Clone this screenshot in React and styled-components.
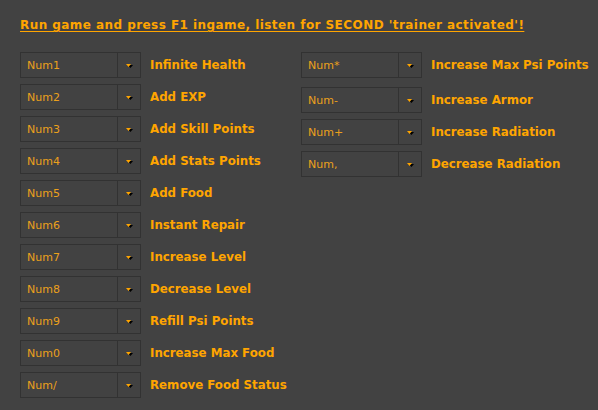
import React from "react";
import styled, { createGlobalStyle } from "styled-components";

const orange = "#ffa500";

const GlobalStyle = createGlobalStyle`
  html, body {
    margin: 0;
    padding: 0;
    background: #424242;
  }
  body {
    font-family: "DejaVu Sans", Verdana, sans-serif;
  }
`;

const Page = styled.div`
  width: 598px;
  height: 410px;
  box-sizing: border-box;
  padding: 18px 0 0 20px;
  background: #424242;
  overflow: hidden;
`;

const Notice = styled.div`
  font-size: 12px;
  font-weight: bold;
  letter-spacing: 0.44px;
  color: ${orange};
  text-decoration: underline;
  text-underline-offset: 2px;
  line-height: 15px;
  margin-bottom: 19px;
`;

const Columns = styled.div`
  display: grid;
  grid-template-columns: 281px 1fr;
`;

const Column = styled.div`
  display: flex;
  flex-direction: column;
`;

const Row = styled.div`
  display: flex;
  align-items: center;
  height: 26px;
  margin-bottom: ${(p) => (p.$tall ? "9px" : "6px")};
`;

const Select = styled.div`
  display: flex;
  width: 121px;
  height: 26px;
  box-sizing: border-box;
  border: 1px solid #323232;
  background: #424242;
  flex-shrink: 0;
`;

const SelectValue = styled.div`
  flex: 1;
  display: flex;
  align-items: center;
  padding-left: 6px;
  font-size: 11px;
  color: #eba01c;
`;

const SelectButton = styled.div`
  width: 22px;
  border-left: 1px solid #323232;
  display: flex;
  align-items: center;
  justify-content: center;
`;

const Label = styled.span`
  margin-left: 9px;
  font-size: 11.8px;
  font-weight: bold;
  color: ${orange};
  white-space: nowrap;
`;

const Arrow = () => (
  <svg width="7" height="5" viewBox="0 0 7 5">
    <polygon points="1.5,2 7,2 4.5,5" fill="#000" />
    <polygon points="0,1 5,1 2.5,4" fill={orange} />
  </svg>
);

const left = [
  ["Num1", "Infinite Health"],
  ["Num2", "Add EXP"],
  ["Num3", "Add Skill Points"],
  ["Num4", "Add Stats Points"],
  ["Num5", "Add Food"],
  ["Num6", "Instant Repair"],
  ["Num7", "Increase Level"],
  ["Num8", "Decrease Level"],
  ["Num9", "Refill Psi Points"],
  ["Num0", "Increase Max Food"],
  ["Num/", "Remove Food Status"],
];

const right = [
  ["Num*", "Increase Max Psi Points"],
  ["Num-", "Increase Armor"],
  ["Num+", "Increase Radiation"],
  ["Num,", "Decrease Radiation"],
];

const HotkeyRow = ({ keyName, label, tall }) => (
  <Row $tall={tall}>
    <Select>
      <SelectValue>{keyName}</SelectValue>
      <SelectButton>
        <Arrow />
      </SelectButton>
    </Select>
    <Label>{label}</Label>
  </Row>
);

export default function App() {
  return (
    <>
      <GlobalStyle />
      <Page>
        <Notice>Run game and press F1 ingame, listen for SECOND 'trainer activated'!</Notice>
        <Columns>
          <Column>
            {left.map(([k, l]) => (
              <HotkeyRow key={k} keyName={k} label={l} />
            ))}
          </Column>
          <Column>
            {right.map(([k, l], i) => (
              <HotkeyRow key={k} keyName={k} label={l} tall={i === 0} />
            ))}
          </Column>
        </Columns>
      </Page>
    </>
  );
}
